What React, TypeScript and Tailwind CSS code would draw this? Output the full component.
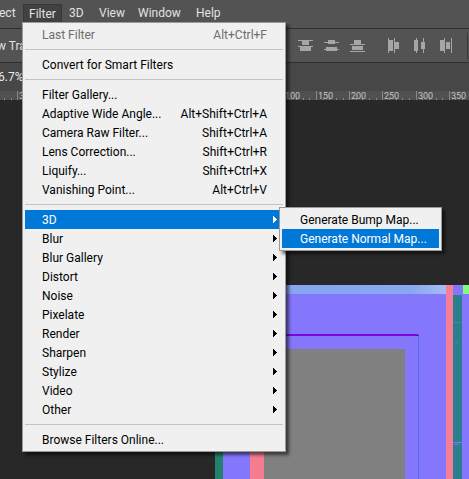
type Item =
  | { sep: true }
  | { sep?: false; label: string; shortcut?: string; disabled?: boolean; sub?: boolean; active?: boolean };

const FILTER_ITEMS: Item[] = [
  { label: "Last Filter", shortcut: "Alt+Ctrl+F", disabled: true },
  { sep: true },
  { label: "Convert for Smart Filters" },
  { sep: true },
  { label: "Filter Gallery..." },
  { label: "Adaptive Wide Angle...", shortcut: "Alt+Shift+Ctrl+A" },
  { label: "Camera Raw Filter...", shortcut: "Shift+Ctrl+A" },
  { label: "Lens Correction...", shortcut: "Shift+Ctrl+R" },
  { label: "Liquify...", shortcut: "Shift+Ctrl+X" },
  { label: "Vanishing Point...", shortcut: "Alt+Ctrl+V" },
  { sep: true },
  { label: "3D", sub: true, active: true },
  { label: "Blur", sub: true },
  { label: "Blur Gallery", sub: true },
  { label: "Distort", sub: true },
  { label: "Noise", sub: true },
  { label: "Pixelate", sub: true },
  { label: "Render", sub: true },
  { label: "Sharpen", sub: true },
  { label: "Stylize", sub: true },
  { label: "Video", sub: true },
  { label: "Other", sub: true },
  { sep: true },
  { label: "Browse Filters Online..." },
];

function Arrow({ white }: { white?: boolean }) {
  return (
    <svg width="4" height="7" viewBox="0 0 4 7" className="block">
      <polygon points="0,0 4,3.5 0,7" fill={white ? "#ffffff" : "#000000"} shapeRendering="crispEdges" />
    </svg>
  );
}

// distribute icons: 0-2 top / center / bottom, 3-5 left / center / right
function DistIcon({ kind }: { kind: number }) {
  const c = "#a6a6a6";
  if (kind < 3) {
    const lines = [
      [0, 6],
      [2, 9],
      [4, 11],
    ][kind];
    return (
      <svg width="15" height="12" viewBox="0 0 15 12" shapeRendering="crispEdges">
        <rect x="4" y={kind === 0 ? 1 : 0} width="7" height="4" fill={c} />
        <rect x="2" y={kind === 2 ? 6 : 7} width="11" height="4" fill={c} />
        <rect x="0" y={lines[0]} width="15" height="1" fill={c} />
        <rect x="0" y={lines[1]} width="15" height="1" fill={c} />
      </svg>
    );
  }
  const k = kind - 3;
  const lines = [
    [0, 6],
    [2, 9],
    [4, 11],
  ][k];
  return (
    <svg width="12" height="15" viewBox="0 0 12 15" shapeRendering="crispEdges">
      <rect x={k === 0 ? 1 : 0} y="2" width="4" height="11" fill={c} />
      <rect x={k === 2 ? 6 : 7} y="4" width="4" height="7" fill={c} />
      <rect x={lines[0]} y="0" width="1" height="15" fill={c} />
      <rect x={lines[1]} y="0" width="1" height="15" fill={c} />
    </svg>
  );
}

function Ruler() {
  const step = 33.2;
  const majors = [-300, -250, -200, -150, -100, -50, 0, 50, 100, 150, 200, 250, 300, 350];
  const x0 = 316 - step;
  const ticks: number[] = [];
  for (let i = -60; i < 80; i++) ticks.push(x0 + (i * step) / 5);
  return (
    <svg width="469" height="9" viewBox="0 0 469 9" className="block">
      <rect width="469" height="9" fill="#505050" />
      {ticks.map((x, i) => (
        <rect key={i} x={Math.round(x)} y="7" width="1" height="2" fill="#8a8a8a" />
      ))}
      {majors.map((v) => {
        const x = Math.round(x0 + ((v - 100) / 50) * step);
        // labels under the open menu are never seen
        const shown = x < 20 || x >= 282;
        return (
          <g key={v}>
            <rect x={x} y="0" width="1" height="9" fill="#8a8a8a" />
            {shown && (
              <text x={x + 2} y="8" fontSize="9" fill="#c4c4c4" fontFamily="Roboto, sans-serif">
                {Math.abs(v)}
              </text>
            )}
          </g>
        );
      })}
    </svg>
  );
}

function NormalMap() {
  return (
    <svg width="254" height="194" viewBox="0 0 254 194" shapeRendering="crispEdges" className="block">
      <defs>
        <linearGradient id="strip" x1="0" x2="1" y1="0" y2="0">
          <stop offset="0" stopColor="#86a4f2" />
          <stop offset="0.85" stopColor="#88a8f0" />
          <stop offset="1" stopColor="#a6bcf2" />
        </linearGradient>
      </defs>
      <rect width="254" height="194" fill="#8577fb" />
      <rect x="0" y="0" width="231" height="9" fill="url(#strip)" />
      <rect x="231" y="0" width="7" height="194" fill="#f57d95" />
      <rect x="238" y="10" width="9" height="184" fill="#2a7f8f" />
      <rect x="238" y="37" width="9" height="1" fill="#3a8b9c" />
      <rect x="240" y="57" width="3" height="1" fill="#6f70e6" />
      <rect x="238" y="157" width="9" height="1" fill="#8577fb" />
      <rect x="239" y="159" width="5" height="1" fill="#7a72ee" />
      <rect x="248" y="0" width="6" height="9" fill="#80fd7e" />
      <rect x="0" y="49" width="203" height="2" fill="#7a08de" />
      <rect x="202" y="50" width="2" height="1" fill="#3c3070" />
      <rect x="203" y="51" width="1" height="143" fill="#4a72ea" />
      <rect x="49" y="64" width="141" height="130" fill="#808080" />
      <rect x="0" y="64" width="8" height="130" fill="#23806b" />
      <rect x="35" y="64" width="14" height="130" fill="#f57d8f" />
    </svg>
  );
}

export default function App() {
  const topMenu = [
    { label: "3D", w: "w-[30px]" },
    { label: "View", w: "w-[39px]" },
    { label: "Window", w: "w-[58px]" },
    { label: "Help", w: "w-[40px]" },
  ];

  return (
    <div
      className="relative flex h-[479px] w-[469px] flex-col overflow-hidden bg-[#282828] text-[12px]"
      style={{ fontFamily: "Roboto, 'Noto Sans', sans-serif" }}
    >
      {/* menu bar */}
      <div className="flex h-[29px] shrink-0 border-b border-[#2f2f2f] bg-[#535353] text-[#e2e2e2]">
        <div className="flex h-[22px] items-end">
          <span className="ml-[-1px] flex h-[18px] w-[24px] items-center">ect</span>
          <span className="flex h-[18px] w-[39px] items-center border border-b-0 border-[#383838] bg-[#414141] pl-[5px]">
            Filter
          </span>
          {topMenu.map((m) => (
            <span key={m.label} className={`flex h-[18px] items-center pl-[7px] ${m.w}`}>
              {m.label}
            </span>
          ))}
        </div>
      </div>

      {/* options bar */}
      <div className="flex h-[34px] shrink-0 items-center border-b border-[#2f2f2f] bg-[#535353] text-[#e2e2e2]">
        <div className="w-[22px] shrink-0 overflow-hidden">
          <span className="ml-[-3px] block whitespace-nowrap">w Tran</span>
        </div>
        <div className="ml-[276px] flex items-center gap-[11px]">
          <DistIcon kind={0} />
          <DistIcon kind={1} />
          <DistIcon kind={2} />
        </div>
        <div className="ml-[23px] flex items-center gap-[14px]">
          <DistIcon kind={3} />
          <DistIcon kind={4} />
          <DistIcon kind={5} />
        </div>
        <div className="ml-auto mr-[1px] h-[26px] w-px bg-[#3a3a3a]" />
      </div>

      {/* document tab row */}
      <div className="flex h-[28px] shrink-0 items-end bg-[#474747] pb-[5px] text-[#ededed]">
        <div className="w-[22px] overflow-hidden">
          <span className="ml-[-2px] block whitespace-nowrap">6.7%</span>
        </div>
      </div>

      <Ruler />

      {/* canvas */}
      <div className="flex-1">
        <div className="ml-[215px] mt-[185px]">
          <NormalMap />
        </div>
      </div>

      {/* Filter dropdown */}
      <div className="absolute left-[22px] top-[22px] w-[264px] border border-[#9a9a9a] bg-[#f0f0f0] p-[2px] text-black shadow-[3px_3px_3px_rgba(0,0,0,0.55)]">
        {FILTER_ITEMS.map((it, i) =>
          it.sep ? (
            <div key={i} className="flex h-[11px] items-center">
              <div className="h-px w-full bg-[#c4c4c4]" />
            </div>
          ) : (
            <div
              key={i}
              className={`flex h-[19px] items-center pl-[17px] ${
                it.active ? "bg-[#0078d7] text-white" : it.disabled ? "text-[#6d6d6d]" : ""
              }`}
            >
              <span className="flex-1 whitespace-nowrap">{it.label}</span>
              {it.shortcut && <span className="mr-[16px] whitespace-nowrap">{it.shortcut}</span>}
              {it.sub && (
                <span className="mr-[6px]">
                  <Arrow white={it.active} />
                </span>
              )}
            </div>
          ),
        )}
      </div>

      {/* 3D submenu */}
      <div className="absolute left-[279px] top-[207px] w-[163px] border border-[#9a9a9a] bg-[#f0f0f0] p-[2px] text-black shadow-[3px_3px_3px_rgba(0,0,0,0.55)]">
        <div className="flex h-[19px] items-center whitespace-nowrap pl-[18px]">Generate Bump Map...</div>
        <div className="flex h-[19px] items-center whitespace-nowrap bg-[#0078d7] pl-[18px] text-white">
          Generate Normal Map...
        </div>
      </div>
    </div>
  );
}
